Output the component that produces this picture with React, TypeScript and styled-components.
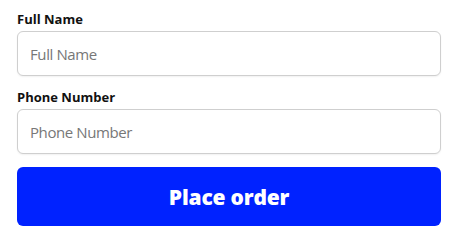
import styled, { createGlobalStyle } from 'styled-components';

const GlobalStyle = createGlobalStyle`
  html, body {
    margin: 0;
    padding: 0;
    background: #fff;
  }
  body {
    font-family: 'Open Sans', 'Noto Sans', sans-serif;
  }
`;

const Form = styled.form`
  width: 424px;
  margin-left: 17px;
  padding-top: 10px;
  display: flex;
  flex-direction: column;
`;

const Field = styled.div`
  display: flex;
  flex-direction: column;
  margin-bottom: 12px;
`;

const Label = styled.label`
  font-size: 13px;
  font-weight: 700;
  line-height: 18px;
  color: #111;
  margin-bottom: 3px;
`;

const Input = styled.input`
  box-sizing: border-box;
  height: 45px;
  width: 100%;
  padding: 0 12px;
  border: 1px solid #cfcfcf;
  border-radius: 6px;
  box-shadow: 0 1px 2px rgba(0, 0, 0, 0.06);
  font-family: inherit;
  font-size: 15px;
  letter-spacing: -0.4px;
  color: #222;
  outline: none;
  &::placeholder {
    color: #777;
  }
`;

const Button = styled.button`
  box-sizing: border-box;
  height: 59px;
  width: 100%;
  margin-top: 1px;
  border: none;
  border-radius: 6px;
  background-color: #0022ff;
  color: #fff;
  font-family: inherit;
  font-size: 21px;
  font-weight: 800;
  letter-spacing: -0.2px;
  cursor: pointer;
`;

export default function App() {
  return (
    <>
      <GlobalStyle />
      <Form onSubmit={(e) => e.preventDefault()}>
        <Field>
          <Label htmlFor="name">Full Name</Label>
          <Input id="name" placeholder="Full Name" />
        </Field>
        <Field>
          <Label htmlFor="phone">Phone Number</Label>
          <Input id="phone" placeholder="Phone Number" />
        </Field>
        <Button type="submit">Place order</Button>
      </Form>
    </>
  );
}
